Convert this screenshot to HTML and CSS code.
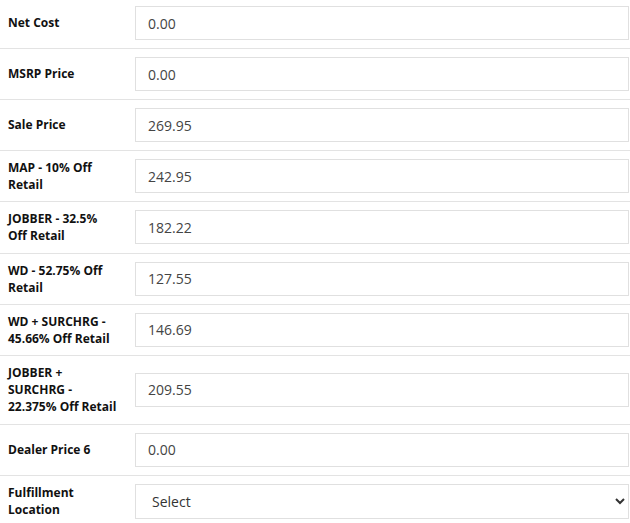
FILE: index.html
```html
<!DOCTYPE html>
<html>
<head>
<meta charset="utf-8">
<link rel="stylesheet" href="styles.css">
</head>
<body>
<div class="form">
  <div class="row"><div class="label">Net Cost</div><div class="field"><input class="control" type="text" value="0.00"></div></div>
  <div class="row"><div class="label">MSRP Price</div><div class="field"><input class="control" type="text" value="0.00"></div></div>
  <div class="row"><div class="label">Sale Price</div><div class="field"><input class="control" type="text" value="269.95"></div></div>
  <div class="row"><div class="label">MAP - 10% Off Retail</div><div class="field"><input class="control" type="text" value="242.95"></div></div>
  <div class="row"><div class="label">JOBBER - 32.5% Off Retail</div><div class="field"><input class="control" type="text" value="182.22"></div></div>
  <div class="row"><div class="label">WD - 52.75% Off Retail</div><div class="field"><input class="control" type="text" value="127.55"></div></div>
  <div class="row"><div class="label">WD + SURCHRG - 45.66% Off Retail</div><div class="field"><input class="control" type="text" value="146.69"></div></div>
  <div class="row"><div class="label">JOBBER + SURCHRG - 22.375% Off Retail</div><div class="field"><input class="control" type="text" value="209.55"></div></div>
  <div class="row"><div class="label">Dealer Price 6</div><div class="field"><input class="control" type="text" value="0.00"></div></div>
  <div class="row"><div class="label">Fulfillment Location</div><div class="field"><select class="control select"><option>Select</option></select></div></div>
</div>
</body>
</html>
```
FILE: styles.css
```css
html, body {
  margin: 0;
  padding: 0;
  background: #fff;
  font-family: "Open Sans", "Liberation Sans", sans-serif;
}
.form {
  width: 630px;
}
.row {
  display: grid;
  grid-template-columns: 127px 1fr;
  align-items: center;
  border-top: 1px solid #e3e3e3;
  padding: 8px 1px 8px 0;
}
.row:first-child {
  border-top: none;
  padding-top: 6px;
}
.label {
  padding: 0 8px;
  font-size: 12px;
  line-height: 17.14px;
  font-weight: 700;
  color: #111;
}
.field {
  display: flex;
  padding-left: 8px;
}
.control {
  box-sizing: border-box;
  width: 100%;
  height: 34px;
  margin: 0;
  padding: 6px 12px;
  border: 1px solid #e0e0e0;
  border-radius: 0;
  background: #fff;
  font-family: "Open Sans", "Liberation Sans", sans-serif;
  font-size: 14px;
  color: #444;
  outline: none;
}
.select {
  height: 35px;
  padding-left: 12px;
  color: #333;
}
```
